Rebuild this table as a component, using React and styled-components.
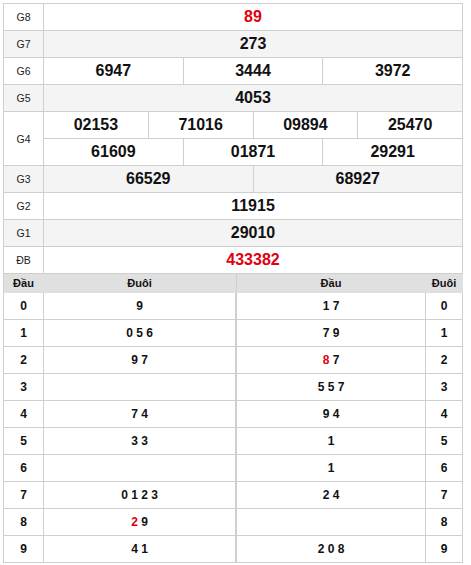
import React from "react";
import styled, { createGlobalStyle } from "styled-components";

const Global = createGlobalStyle`
  html, body { margin: 0; padding: 0; background: #fff; }
  body { font-family: "Liberation Sans", Arial, sans-serif; color: #111; }
`;

const Page = styled.div`
  padding: 3px;
  width: 460px;
`;

const Board = styled.div`
  border-top: 1px solid #cfcfcf;
  border-left: 1px solid #cfcfcf;
`;

const Row = styled.div`
  display: flex;
  background: ${(p) => (p.$alt ? "#f4f4f4" : "#fff")};
`;

const Label = styled.div`
  width: 39px;
  flex: none;
  display: flex;
  align-items: center;
  justify-content: center;
  font-size: 10.5px;
  color: #222;
  border-right: 1px solid #cfcfcf;
  border-bottom: 1px solid #cfcfcf;
`;

const Body = styled.div`
  flex: 1;
  display: flex;
  flex-direction: column;
`;

const Line = styled.div`
  display: flex;
  height: 27px;
`;

const Num = styled.div`
  flex: 1;
  display: flex;
  align-items: center;
  justify-content: center;
  font-size: 16px;
  font-weight: bold;
  color: ${(p) => (p.$red ? "#e1000f" : "#111")};
  border-right: 1px solid #cfcfcf;
  border-bottom: 1px solid #cfcfcf;
  min-width: 0;
`;

const Loto = styled.div`
  display: flex;
`;

const LotoTable = styled.div`
  width: ${(p) => p.$w}px;
  border-left: 1px solid #cfcfcf;
`;

const LotoRow = styled.div`
  display: flex;
  height: ${(p) => (p.$head ? 19 : 27)}px;
  background: ${(p) => (p.$head ? "#e0e0e0" : "#fff")};
`;

const LotoCell = styled.div`
  width: ${(p) => (p.$w ? `${p.$w}px` : "auto")};
  flex: ${(p) => (p.$w ? "none" : "1")};
  display: flex;
  align-items: center;
  justify-content: center;
  font-weight: bold;
  font-size: ${(p) => (p.$head ? "11px" : "12px")};
  color: #111;
  border-right: 1px solid ${(p) => (p.$head ? "#e0e0e0" : "#cfcfcf")};
  border-bottom: 1px solid ${(p) => (p.$head ? "#e0e0e0" : "#cfcfcf")};
  white-space: pre;
`;

const Red = styled.span`
  color: #e1000f;
`;

const prizes = [
  { label: "G8", lines: [["89"]], red: true },
  { label: "G7", lines: [["273"]], alt: true },
  { label: "G6", lines: [["6947", "3444", "3972"]] },
  { label: "G5", lines: [["4053"]], alt: true },
  { label: "G4", lines: [["02153", "71016", "09894", "25470"], ["61609", "01871", "29291"]] },
  { label: "G3", lines: [["66529", "68927"]], alt: true },
  { label: "G2", lines: [["11915"]] },
  { label: "G1", lines: [["29010"]], alt: true },
  { label: "ĐB", lines: [["433382"]], red: true },
];

const left = [
  ["9"],
  ["0 5 6"],
  ["9 7"],
  [""],
  ["7 4"],
  ["3 3"],
  [""],
  ["0 1 2 3"],
  [{ r: "2" }, " 9"],
  ["4 1"],
];

const right = [
  ["1 7"],
  ["7 9"],
  [{ r: "8" }, " 7"],
  ["5 5 7"],
  ["9 4"],
  ["1"],
  ["1"],
  ["2 4"],
  [""],
  ["2 0 8"],
];

const renderParts = (parts) =>
  parts.map((p, i) =>
    typeof p === "string" ? <React.Fragment key={i}>{p}</React.Fragment> : <Red key={i}>{p.r}</Red>
  );

export default function App() {
  return (
    <Page>
      <Global />
      <Board>
        {prizes.map((p) => (
          <Row key={p.label} $alt={p.alt}>
            <Label>{p.label}</Label>
            <Body>
              {p.lines.map((line, i) => (
                <Line key={i}>
                  {line.map((n) => (
                    <Num key={n} $red={p.red}>
                      {n}
                    </Num>
                  ))}
                </Line>
              ))}
            </Body>
          </Row>
        ))}
      </Board>
      <Loto>
        <LotoTable $w={233}>
          <LotoRow $head>
            <LotoCell $head $w={39}>Đầu</LotoCell>
            <LotoCell $head>Đuôi</LotoCell>
          </LotoRow>
          {left.map((parts, i) => (
            <LotoRow key={i}>
              <LotoCell $w={39}>{i}</LotoCell>
              <LotoCell>{renderParts(parts)}</LotoCell>
            </LotoRow>
          ))}
        </LotoTable>
        <LotoTable $w={227}>
          <LotoRow $head>
            <LotoCell $head>Đầu</LotoCell>
            <LotoCell $head $w={36}>Đuôi</LotoCell>
          </LotoRow>
          {right.map((parts, i) => (
            <LotoRow key={i}>
              <LotoCell>{renderParts(parts)}</LotoCell>
              <LotoCell $w={36}>{i}</LotoCell>
            </LotoRow>
          ))}
        </LotoTable>
      </Loto>
    </Page>
  );
}
